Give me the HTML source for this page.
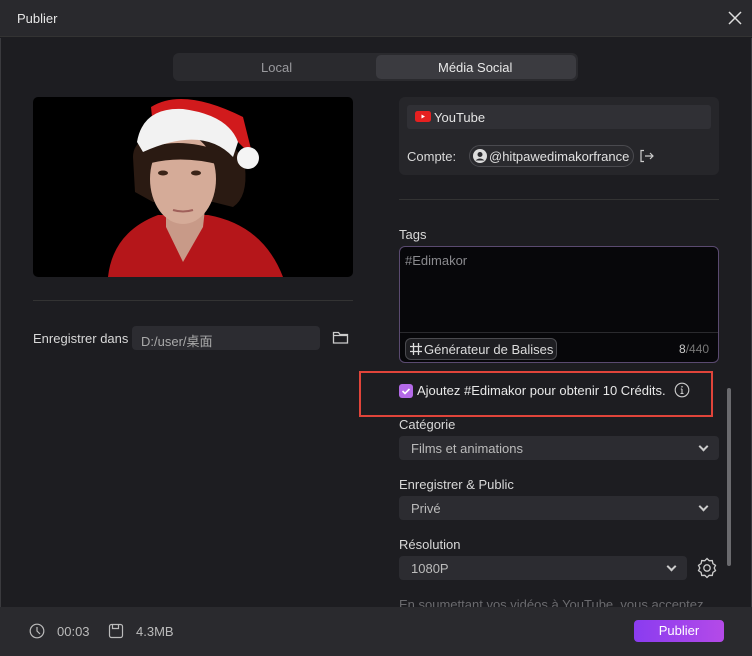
<!DOCTYPE html>
<html><head><meta charset="utf-8"><style>
*{margin:0;padding:0;box-sizing:border-box}
body{width:752px;height:656px;background:#1d1d21;font-family:"Liberation Sans","Noto Sans CJK SC",sans-serif;color:#ddd;position:relative;overflow:hidden;font-size:13px}
.abs{position:absolute}
.title{left:0;top:0;width:752px;height:37px;background:#29292d;border-bottom:1px solid #333}
.sel{background:#2c2c31;border-radius:4px}
.lbl{color:#d8d8d8;font-size:13px}
.chev{position:absolute;right:12px;top:7px;width:7px;height:7px;border-right:2px solid #ccc;border-bottom:2px solid #ccc;transform:rotate(45deg)}
</style></head><body>
<div class="abs title"></div>
<div class="abs" style="left:17px;top:11px;font-size:13px;color:#e6e6e6">Publier</div>
<svg class="abs" style="left:727px;top:10px" width="16" height="16"><path d="M2 2L14 14M14 2L2 14" stroke="#ddd" stroke-width="1.5"/></svg>
<div class="abs" style="left:0;top:38px;width:1px;height:570px;background:#3a3a3e"></div>
<div class="abs" style="left:751px;top:38px;width:1px;height:570px;background:#3a3a3e"></div>

<div class="abs" style="left:173px;top:53px;width:405px;height:28px;background:#2a2a2e;border-radius:6px"></div>
<div class="abs" style="left:376px;top:55px;width:200px;height:24px;background:#3b3b40;border-radius:5px"></div>
<div class="abs" style="left:261px;top:60px;color:#9a9a9e">Local</div>
<div class="abs" style="left:438px;top:60px;color:#e8e8e8">Média Social</div>

<svg class="abs" style="left:33px;top:97px;border-radius:5px" width="320" height="180" viewBox="0 0 320 180">
<rect width="320" height="180" fill="#000"/>
<path d="M75 180 Q80 135 125 118 L175 118 Q230 128 250 180Z" fill="#b5161a"/>
<path d="M133 112 L133 130 L150 165 L170 130 L172 112Z" fill="#c89a88"/>
<path d="M100 60 Q100 35 150 35 Q205 38 212 70 Q215 100 200 110 L180 105 L120 105 L102 95Z" fill="#2a1a12"/>
<ellipse cx="150" cy="82" rx="33" ry="45" fill="#d5ab98"/>
<path d="M118 50 Q150 40 190 55 L188 68 Q150 58 118 66Z" fill="#2a1a12"/>
<path d="M118 10 Q150 -10 210 20 L220 60 L200 40 Q160 20 120 30Z" fill="#d11a1c"/>
<path d="M104 45 Q110 10 150 12 Q195 18 205 45 L200 60 Q170 28 110 55Z" fill="#f2f2f2"/>
<circle cx="215" cy="61" r="11" fill="#f4f4f4"/>
<ellipse cx="130" cy="76" rx="5" ry="2.5" fill="#3a2418"/>
<ellipse cx="163" cy="76" rx="5" ry="2.5" fill="#3a2418"/>
<path d="M140 113 Q150 116 160 113" stroke="#a0605a" stroke-width="2" fill="none"/>
</svg>

<div class="abs" style="left:33px;top:300px;width:320px;height:1px;background:#333"></div>
<div class="abs lbl" style="left:33px;top:331px">Enregistrer dans</div>
<div class="abs" style="left:132px;top:326px;width:188px;height:24px;background:#2c2c31;border-radius:4px"></div>
<div class="abs" style="left:141px;top:331px;color:#aaa">D:/user/桌面</div>
<svg class="abs" style="left:332px;top:329px" width="17" height="16"><path d="M1.5 3.5h5l1.5 2h7.5v8.5h-14z M1.5 6.5h14" stroke="#ccc" stroke-width="1.3" fill="none"/></svg>

<div class="abs" style="left:399px;top:97px;width:320px;height:78px;background:#26262a;border-radius:6px"></div>
<div class="abs" style="left:407px;top:105px;width:304px;height:24px;background:#303035;border-radius:3px"></div>
<svg class="abs" style="left:415px;top:111px" width="16" height="12"><rect width="16" height="11" rx="2.5" fill="#e62020"/><path d="M6.5 3.5L10 5.5L6.5 7.5Z" fill="#fff"/></svg>
<div class="abs" style="left:434px;top:110px;color:#e4e4e4">YouTube</div>
<div class="abs lbl" style="left:407px;top:149px">Compte:</div>
<div class="abs" style="left:469px;top:145px;width:165px;height:22px;border:1px solid #4a4a4f;border-radius:11px;background:#2a2a2e"></div>
<svg class="abs" style="left:473px;top:149px" width="14" height="14"><circle cx="7" cy="7" r="7" fill="#ddd"/><circle cx="7" cy="5.5" r="2.5" fill="#2a2a2e"/><path d="M2.5 11.5Q7 7.5 11.5 11.5" fill="#2a2a2e"/></svg>
<div class="abs" style="left:489px;top:149px;color:#e0e0e0">@hitpawedimakorfrance</div>
<svg class="abs" style="left:639px;top:149px" width="16" height="14"><path d="M5 1.5H2v11h3M6 7h8M11 4l3 3-3 3" stroke="#ccc" stroke-width="1.2" fill="none"/></svg>

<div class="abs" style="left:399px;top:199px;width:320px;height:1px;background:#333"></div>
<div class="abs lbl" style="left:399px;top:227px">Tags</div>
<div class="abs" style="left:399px;top:246px;width:320px;height:117px;background:#07070a;border:1px solid #5a4a70;border-radius:6px"></div>
<div class="abs" style="left:400px;top:332px;width:318px;height:1px;background:#2a2a2e"></div>
<div class="abs" style="left:405px;top:253px;color:#8a8a8e">#Edimakor</div>
<div class="abs" style="left:405px;top:338px;width:152px;height:22px;border:1px solid #4a4a4f;border-radius:6px;background:#1e1e22"></div>
<svg class="abs" style="left:409px;top:342px" width="14" height="14"><path d="M4.5 1v12M9.5 1v12M1 4.5h12M1 9.5h12" stroke="#ddd" stroke-width="1.3"/></svg>
<div class="abs" style="left:424px;top:342px;color:#ddd;font-size:13px">Générateur de Balises</div>
<div class="abs" style="left:679px;top:342px;color:#ccc;font-size:12px">8<span style="color:#777">/440</span></div>

<div class="abs" style="left:359px;top:371px;width:354px;height:46px;border:2px solid #e0443a"></div>
<svg class="abs" style="left:399px;top:384px" width="14" height="14"><rect width="14" height="14" rx="3" fill="#b46ae8"/><path d="M3.5 7l2.5 2.5 4.5-4.5" stroke="#fff" stroke-width="1.6" fill="none"/></svg>
<div class="abs" style="left:417px;top:383px;color:#e8e8e8">Ajoutez #Edimakor pour obtenir 10 Crédits.</div>
<svg class="abs" style="left:674px;top:382px" width="16" height="16"><circle cx="8" cy="8" r="6.8" stroke="#ccc" stroke-width="1.1" fill="none"/><path d="M8 7v4.5M6.5 11.5h3M6.8 7h1.2" stroke="#ccc" stroke-width="1.1"/><circle cx="8" cy="4.8" r=".8" fill="#ccc"/></svg>

<div class="abs" style="left:727px;top:388px;width:4px;height:178px;background:#6a6a6e;border-radius:2px"></div>

<div class="abs lbl" style="left:399px;top:417px">Catégorie</div>
<div class="abs sel" style="left:399px;top:436px;width:320px;height:24px"><span class="abs" style="left:12px;top:5px;color:#bbb">Films et animations</span><span class="chev"></span></div>
<div class="abs lbl" style="left:399px;top:477px">Enregistrer &amp; Public</div>
<div class="abs sel" style="left:399px;top:496px;width:320px;height:24px"><span class="abs" style="left:12px;top:5px;color:#bbb">Privé</span><span class="chev"></span></div>
<div class="abs lbl" style="left:399px;top:537px">Résolution</div>
<div class="abs sel" style="left:399px;top:556px;width:288px;height:24px"><span class="abs" style="left:12px;top:5px;color:#bbb">1080P</span><span class="chev"></span></div>
<svg class="abs" style="left:695px;top:556px" width="24" height="24" viewBox="0 0 24 24"><path d="M12 2.5l2.2 2.2 3.1-.1.6 3 2.6 1.8-1.3 2.6 1.3 2.6-2.6 1.8-.6 3-3.1-.1L12 21.5l-2.2-2.2-3.1.1-.6-3-2.6-1.8L4.8 12 3.5 9.4l2.6-1.8.6-3 3.1.1z" stroke="#ccc" stroke-width="1.3" fill="none"/><circle cx="12" cy="12" r="3.2" stroke="#ccc" stroke-width="1.3" fill="none"/></svg>
<div class="abs" style="left:399px;top:597px;color:#6a6a6e;white-space:nowrap">En soumettant vos vidéos à YouTube, vous acceptez</div>

<div class="abs" style="left:0;top:607px;width:752px;height:49px;background:#2a2a2e"></div>
<svg class="abs" style="left:29px;top:623px" width="16" height="16"><circle cx="8" cy="8" r="6.8" stroke="#bbb" stroke-width="1.2" fill="none"/><path d="M8 4v4l3 3" stroke="#bbb" stroke-width="1.2" fill="none"/></svg>
<div class="abs" style="left:57px;top:624px;color:#bbb">00:03</div>
<svg class="abs" style="left:108px;top:623px" width="16" height="16"><rect x="1.5" y="1.5" width="13" height="13" rx="2" stroke="#bbb" stroke-width="1.2" fill="none"/><path d="M4.5 1.5v4h6v-4" stroke="#bbb" stroke-width="1.2" fill="none"/></svg>
<div class="abs" style="left:136px;top:624px;color:#bbb">4.3MB</div>
<div class="abs" style="left:634px;top:620px;width:90px;height:22px;border-radius:4px;background:linear-gradient(90deg,#8a3cf0,#b44ae8);color:#fff;text-align:center;line-height:22px">Publier</div>
</body></html>
